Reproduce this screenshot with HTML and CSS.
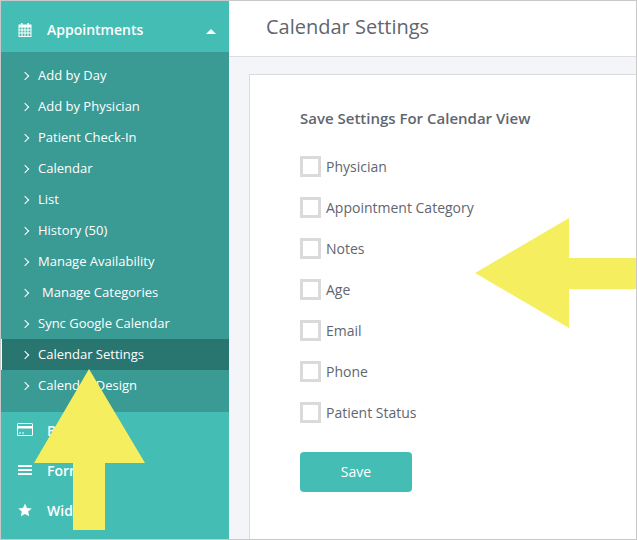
FILE: index.html
```html
<!DOCTYPE html>
<html lang="en">
<head>
    <meta charset="UTF-8">
    <title>Calendar Settings</title>
    <link rel="stylesheet" href="styles.css">
</head>
<body>

<div class="frame">
    <div class="sidebar">
        <div class="menu-head open">
            <svg class="menu-icon" viewBox="0 0 14 14"><path fill="#fff" fill-rule="evenodd" d="M3 0h1.500v1.500h5V0H11v1.500h2.500V14H.5V1.500H3zM1.500 4.500v2h2v-2zm3 0v2h2v-2zm3 0v2h2v-2zm3 0v2h2v-2zm-9 3v2h2v-2zm3 0v2h2v-2zm3 0v2h2v-2zm3 0v2h2v-2zm-9 3V13h2v-2.500zm3 0V13h2v-2.500zm3 0V13h2v-2.500zm3 0V13h2v-2.500z"/></svg>
            <span>Appointments</span>
            <svg class="caret" viewBox="0 0 10 5"><path fill="#fff" d="M5 0l5 5H0z"/></svg>
        </div>
        <ul class="submenu">
            <li>Add by Day</li>
            <li>Add by Physician</li>
            <li>Patient Check-In</li>
            <li>Calendar</li>
            <li>List</li>
            <li>History (50)</li>
            <li>Manage Availability</li>
            <li class="indent">Manage Categories</li>
            <li>Sync Google Calendar</li>
            <li class="active">Calendar Settings</li>
            <li>Calendar Design</li>
        </ul>
        <div class="menu-head">
            <svg class="menu-icon wide" viewBox="0 0 16 13"><path fill="#fff" fill-rule="evenodd" d="M1.500 0h13A1.500 1.500 0 0 1 16 1.500v10a1.500 1.500 0 0 1-1.500 1.500h-13A1.500 1.500 0 0 1 0 11.500v-10A1.500 1.500 0 0 1 1.500 0zM1 1v2h14V1zm0 4.500V12h14V5.500zM2 9.500h2v1H2zm3 0h2v1H5z"/></svg>
            <span>Billing</span>
        </div>
        <div class="menu-head">
            <svg class="menu-icon" viewBox="0 0 14 10"><path fill="#fff" d="M0 0h14v2H0zM0 4h14v2H0zM0 8h14v2H0z"/></svg>
            <span>Forms</span>
        </div>
        <div class="menu-head">
            <svg class="menu-icon" viewBox="0 0 14 14"><path fill="#fff" d="M7 .5l2 4.400 4.800.5-3.600 3.200 1 4.700L7 10.900l-4.200 2.400 1-4.700L.2 5.400 5 4.900z"/></svg>
            <span>Widgets</span>
        </div>
    </div>

    <div class="main">
        <div class="page-title">Calendar Settings</div>
        <div class="content">
            <div class="card">
                <h2>Save Settings For Calendar View</h2>
                <label class="check"><span class="box"></span>Physician</label>
                <label class="check"><span class="box"></span>Appointment Category</label>
                <label class="check"><span class="box"></span>Notes</label>
                <label class="check"><span class="box"></span>Age</label>
                <label class="check"><span class="box"></span>Email</label>
                <label class="check"><span class="box"></span>Phone</label>
                <label class="check"><span class="box"></span>Patient Status</label>
                <button class="save">Save</button>
            </div>
        </div>
    </div>

    <!-- yellow annotation arrows -->
    <svg class="arrows" viewBox="0 0 637 540">
        <path fill="#f5ef60" d="M89 369L145 463H105V530H73V463H34z"/>
        <path fill="#f5ef60" d="M475 273L569 218V258H636V289H569V328z"/>
    </svg>
</div>

</body>
</html>
```

FILE: styles.css
```css
* {
    box-sizing: border-box;
}
html, body {
    margin: 0;
    height: 100%;
}
body {
    font-family: "Open Sans", sans-serif;
    color: #5f6670;
}
.frame {
    position: relative;
    display: flex;
    width: 637px;
    height: 540px;
    overflow: hidden;
    border: 1px solid #c9c9c9;
    background-color: #f3f5f9;
}
.sidebar {
    flex: 0 0 228px;
    background-color: #44bdb5;
    color: #fff;
}
.menu-head {
    display: flex;
    align-items: center;
    height: 40px;
    padding: 0 0 4px 17px;
    font-size: 14px;
    font-weight: 600;
}
.menu-head.open {
    height: 51px;
    padding: 6px 0 0 17px;
}
.menu-head span {
    margin-left: 15px;
}
.menu-icon {
    flex: 0 0 14px;
    width: 14px;
    height: 14px;
}
.menu-icon.wide {
    flex-basis: 16px;
    width: 16px;
    height: 13px;
    margin: 0 -1px 1px -1px;
}
.caret {
    width: 10px;
    height: 5px;
    margin-left: auto;
    margin-right: 13px;
    margin-top: 3px;
}
.submenu {
    list-style: none;
    margin: 0;
    padding: 8px 0 11px;
    background-color: #3a9a94;
    font-size: 13px;
}
.submenu li {
    position: relative;
    height: 31px;
    line-height: 31px;
    padding-left: 37px;
}
.submenu li::before {
    content: "";
    position: absolute;
    left: 21px;
    top: 13px;
    width: 5px;
    height: 5px;
    border-top: 1px solid #fff;
    border-right: 1px solid #fff;
    transform: rotate(45deg);
}
.submenu li.indent {
    padding-left: 41px;
}
.submenu li.active {
    background-color: #297570;
    box-shadow: inset 1px 0 0 #fff;
}
.main {
    flex: 1;
    display: flex;
    flex-direction: column;
    min-width: 0;
}
.page-title {
    height: 56px;
    padding: 10px 0 0 37px;
    background-color: #fff;
    border-bottom: 1px solid #dcdee2;
    font-size: 20px;
    line-height: 32px;
}
.content {
    flex: 1;
    padding: 17px 0 0 20px;
}
.card {
    height: 100%;
    padding: 33px 0 0 50px;
    background-color: #fff;
    border: 1px solid #d9dbdf;
    border-bottom: none;
    border-right: none;
}
.card h2 {
    margin: 0 0 28px;
    font-size: 15px;
    font-weight: 600;
    line-height: 20px;
}
.check {
    display: flex;
    align-items: center;
    height: 21px;
    margin-bottom: 20px;
    font-size: 14px;
}
.box {
    flex: 0 0 21px;
    height: 21px;
    margin-right: 5px;
    border: 3px solid #dadada;
}
.save {
    display: block;
    width: 112px;
    height: 40px;
    margin-top: 29px;
    padding: 0 0 2px;
    border: none;
    border-radius: 4px;
    background-color: #44bdb5;
    color: #fff;
    font-family: inherit;
    font-size: 14px;
}
.arrows {
    position: absolute;
    left: -1px;
    top: -1px;
    width: 637px;
    height: 540px;
}
```
